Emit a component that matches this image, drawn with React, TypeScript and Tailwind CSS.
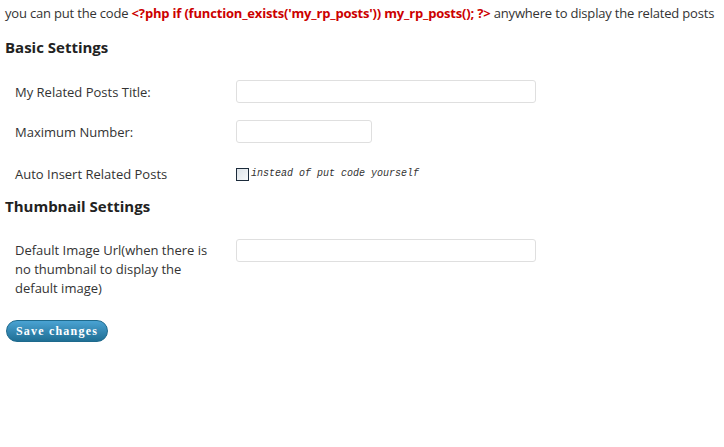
import { useState } from 'react';

const Row = ({ label, children, top = 'items-center' }: { label: React.ReactNode; children: React.ReactNode; top?: string }) => (
  <div className={`flex min-h-[23px] ${top}`}>
    <div className="w-[236px] shrink-0 pl-[15px] pr-2">{label}</div>
    <div className="flex-1">{children}</div>
  </div>
);

const App = () => {
  const [title, setTitle] = useState('');
  const [max, setMax] = useState('');
  const [auto, setAuto] = useState(false);
  const [img, setImg] = useState('');

  const inputCls =
    'h-[23px] rounded-[3px] border border-[#dfdfdf] bg-white px-1 text-[13px] outline-none focus:border-[#aaa]';

  return (
    <div className="min-h-[447px] bg-white text-[#333] text-[13px] leading-[18px]" style={{ fontFamily: '"Open Sans", "Noto Sans", sans-serif' }}>
      <p className="pl-[5px] pt-[4px] whitespace-nowrap tracking-[-0.18px]">
        you can put the code{' '}
        <span className="font-bold text-[#cc0000]">&lt;?php if (function_exists('my_rp_posts')) my_rp_posts(); ?&gt;</span>{' '}
        anywhere to display the related posts
      </p>

      <h3 className="mt-[16px] pl-[5px] text-[15px] font-bold leading-[18px] text-[#222]">Basic Settings</h3>

      <div className="mt-[24px] flex flex-col gap-[17px]">
        <Row label="My Related Posts Title:">
          <input value={title} onChange={(e) => setTitle(e.target.value)} className={`${inputCls} w-[300px]`} />
        </Row>
        <Row label="Maximum Number:">
          <input value={max} onChange={(e) => setMax(e.target.value)} className={`${inputCls} w-[136px]`} />
        </Row>
        <Row label={<span className="block pt-[5px]">Auto Insert Related Posts</span>}>
          <label className="flex items-center pt-[5px]">
            <input
              type="checkbox"
              checked={auto}
              onChange={(e) => setAuto(e.target.checked)}
              className="h-[13px] w-[13px] appearance-none border border-[#1c2b3b] bg-gradient-to-br from-[#dde3e8] to-[#f7f9fa] checked:bg-[#21759b]"
            />
            <span className="ml-[2px] text-[10px] italic text-[#333]" style={{ fontFamily: '"Liberation Mono", monospace' }}>
              instead of put code yourself
            </span>
          </label>
        </Row>
      </div>

      <h3 className="mt-[14px] pl-[5px] text-[15px] font-bold leading-[18px] text-[#222]">Thumbnail Settings</h3>

      <div className="mt-[24px]">
        <Row
          top="items-start"
          label={
            <span className="block w-[200px] leading-[19px] pt-[2px]">
              Default Image Url(when there is no thumbnail to display the default image)
            </span>
          }
        >
          <input value={img} onChange={(e) => setImg(e.target.value)} className={`${inputCls} w-[300px]`} />
        </Row>
      </div>

      <div className="mt-[22px] pl-[6px]">
        <button
          type="button"
          className="h-[22px] w-[102px] rounded-full border border-[#1e6a8d] bg-gradient-to-b from-[#4aa3d3] to-[#1f6f95] text-[12px] font-bold leading-none tracking-[1.2px] text-white"
          style={{ fontFamily: '"Liberation Serif", serif' }}
        >
          Save changes
        </button>
      </div>
    </div>
  );
};

export default App;
